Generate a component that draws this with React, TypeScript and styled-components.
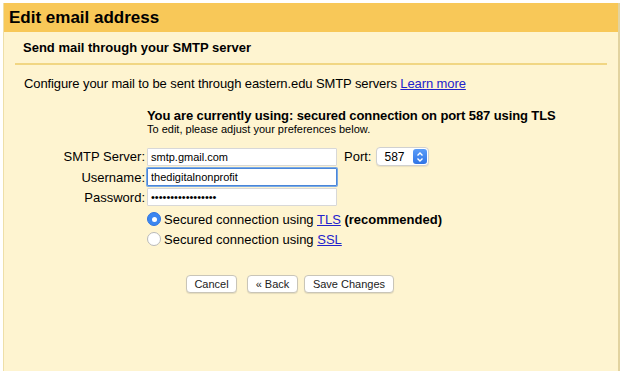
import React from "react";
import styled, { createGlobalStyle } from "styled-components";

const Global = createGlobalStyle`
  html, body { margin: 0; padding: 0; background: #fff; }
  body { font-family: "Liberation Sans", Arial, sans-serif; color: #000; }
`;

const Window = styled.div`
  margin: 3px 0 0 3px;
  width: 617px;
  height: 368px;
  display: flex;
  flex-direction: column;
  background: #fef4d0;
  border-left: 1px solid #eedfa8;
  border-right: 2px solid #e2d3a0;
  box-sizing: border-box;
`;

const Header = styled.div`
  height: 29px;
  background: #f8c858;
  display: flex;
  align-items: center;
  padding-left: 5px;
  font-size: 17px;
  font-weight: bold;
`;

const Section = styled.div`
  padding: 0 11px 0 11px;
`;

const SubTitle = styled.div`
  font-size: 13px;
  font-weight: bold;
  padding: 8px 0 0 8px;
  height: 23px;
`;

const Rule = styled.div`
  height: 2px;
  background: #f1d683;
`;

const Intro = styled.div`
  font-size: 13px;
  padding: 11px 0 0 9px;
  height: 26px;
  letter-spacing: -0.1px;
`;

const Link = styled.a`
  color: #2222cc;
  text-decoration: underline;
  cursor: pointer;
`;

const Status = styled.div`
  padding: 6px 0 0 132px;
  display: flex;
  flex-direction: column;
`;

const StatusMain = styled.div`
  font-size: 13px;
  font-weight: bold;
  line-height: 15px;
  letter-spacing: -0.1px;
`;

const StatusSub = styled.div`
  font-size: 11px;
  line-height: 13px;
`;

const Form = styled.div`
  display: grid;
  grid-template-columns: 132px 190px auto;
  row-gap: 2px;
  margin-top: 11px;
  align-items: center;
`;

const Label = styled.label`
  font-size: 13px;
  text-align: right;
  padding-right: 2px;
`;

const Input = styled.input<{ $focus?: boolean }>`
  box-sizing: border-box;
  width: 190px;
  height: 18px;
  margin: 0;
  padding: 0 3px;
  font-family: "Liberation Sans", Arial, sans-serif;
  font-size: 11px;
  color: #000;
  background: #fff;
  border: 1px solid ${(p) => (p.$focus ? "#4a86d8" : "#d8d8d8")};
  box-shadow: ${(p) => (p.$focus ? "0 0 0 1px #7aa9e6" : "none")};
  border-radius: 1px;
  outline: none;
`;

const PortWrap = styled.div`
  display: flex;
  align-items: center;
  gap: 5px;
  padding-left: 7px;
  font-size: 13px;
`;

const Select = styled.div`
  box-sizing: border-box;
  width: 53px;
  height: 19px;
  display: flex;
  align-items: center;
  justify-content: space-between;
  background: #fff;
  border: 1px solid #d0d0d0;
  border-radius: 4px;
  padding-left: 7px;
  padding-right: 1px;
  font-size: 12px;
  box-shadow: 0 1px 1px rgba(0, 0, 0, 0.08);
`;

const Stepper = styled.div`
  width: 14px;
  height: 15px;
  background: linear-gradient(#5a9cf8, #2f74e6);
  border-radius: 3px;
  display: flex;
  align-items: center;
  justify-content: center;
`;

const Radios = styled.div`
  display: flex;
  flex-direction: column;
  gap: 4px;
  padding: 5px 0 0 132px;
`;

const RadioRow = styled.div`
  display: flex;
  align-items: center;
  gap: 3px;
  font-size: 13px;
  height: 16px;
`;

const RadioText = styled.span`
  white-space: pre;
`;

const RadioDot = styled.span<{ $on?: boolean }>`
  box-sizing: border-box;
  width: 14px;
  height: 14px;
  border-radius: 50%;
  display: inline-flex;
  align-items: center;
  justify-content: center;
  background: ${(p) => (p.$on ? "#3b86f0" : "#fff")};
  border: 1px solid ${(p) => (p.$on ? "#2f74e0" : "#b9b9b9")};
  &::after {
    content: "";
    width: 5px;
    height: 5px;
    border-radius: 50%;
    background: #fff;
    display: ${(p) => (p.$on ? "block" : "none")};
  }
`;

const Buttons = styled.div`
  display: flex;
  padding: 28px 0 0 171px;
`;

const Button = styled.button<{ $w: number; $gap: number }>`
  box-sizing: border-box;
  width: ${(p) => p.$w}px;
  height: 18px;
  margin-right: ${(p) => p.$gap}px;
  background: #fff;
  border: 1px solid #c9c5b8;
  border-radius: 4px;
  font-family: "Liberation Sans", Arial, sans-serif;
  font-size: 11px;
  color: #222;
  padding: 0;
  box-shadow: 0 1px 1px rgba(0, 0, 0, 0.1);
`;

export default function App() {
  return (
    <>
      <Global />
      <Window>
        <Header>Edit email address</Header>
        <Section>
          <SubTitle>Send mail through your SMTP server</SubTitle>
          <Rule />
          <Intro>
            Configure your mail to be sent through eastern.edu SMTP servers{" "}
            <Link>Learn more</Link>
          </Intro>
          <Status>
            <StatusMain>
              You are currently using: secured connection on port 587 using TLS
            </StatusMain>
            <StatusSub>To edit, please adjust your preferences below.</StatusSub>
          </Status>
          <Form>
            <Label>SMTP Server:</Label>
            <Input defaultValue="smtp.gmail.com" />
            <PortWrap>
              Port:
              <Select>
                587
                <Stepper>
                  <svg width="8" height="12" viewBox="0 0 8 12">
                    <path d="M1.5 4.5 L4 2 L6.5 4.5 M1.5 7.5 L4 10 L6.5 7.5" fill="none" stroke="#fff" strokeWidth="1.4" />
                  </svg>
                </Stepper>
              </Select>
            </PortWrap>
            <Label>Username:</Label>
            <Input $focus defaultValue="thedigitalnonprofit" />
            <span />
            <Label>Password:</Label>
            <Input type="password" defaultValue="thedigitalnonprof" />
            <span />
          </Form>
          <Radios>
            <RadioRow>
              <RadioDot $on />
              <RadioText>
                Secured connection using <Link>TLS</Link> <b>(recommended)</b>
              </RadioText>
            </RadioRow>
            <RadioRow>
              <RadioDot />
              <RadioText>
                Secured connection using <Link>SSL</Link>
              </RadioText>
            </RadioRow>
          </Radios>
          <Buttons>
            <Button $w={51} $gap={10}>Cancel</Button>
            <Button $w={51} $gap={6}>« Back</Button>
            <Button $w={90} $gap={0}>Save Changes</Button>
          </Buttons>
        </Section>
      </Window>
    </>
  );
}
